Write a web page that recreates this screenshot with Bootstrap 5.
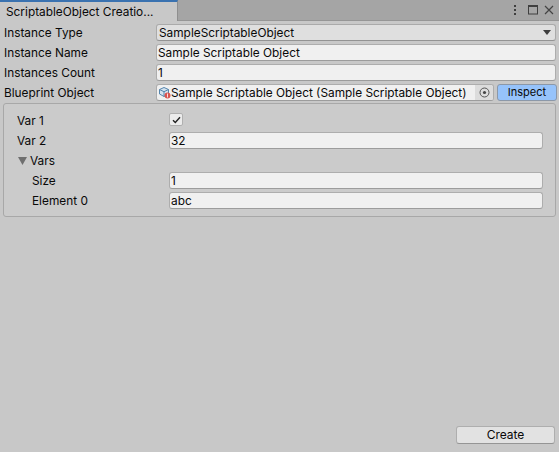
<!DOCTYPE html>
<html lang="en">
<head>
  <meta charset="UTF-8" />
  <meta name="viewport" content="width=device-width, initial-scale=1.0" />
  <title>ScriptableObject Creation</title>
  <link rel="stylesheet" href="https://cdn.jsdelivr.net/npm/bootstrap@5.3.0/dist/css/bootstrap.min.css" />
  <style>
    html, body { height: 100%; }
    body { background: #c8c8c8; color: #090909; font-family: Inter, "Liberation Sans", sans-serif; font-size: 11.85px; line-height: 18px; overflow: hidden; }
    .win { height: 452px; }
    .title-bar { height: 21px; background: #a5a5a5; border-bottom: 1px solid #969696; }
    .win-tab { width: 178px; height: 21px; margin-bottom: -1px; background: #c8c8c8; border-top: 2px solid #3a72b0; border-right: 1px solid #8f8f8f; padding-left: 6px; line-height: 21px; }
    .win-tools { padding-right: 5px; gap: 6px; }
    .max-icon { margin-left: 5px; }
    .form-area { padding: 3px 3px 0 4px; }
    .prop-row { height: 18px; margin-bottom: 2px; }
    .prop-label { width: 152px; flex: none; }
    .unity-field { flex: 1 1 0; min-width: 0; height: 17px; background: #f0f0f0; border: 1px solid #adadad; border-bottom-color: #9c9c9c; border-radius: 3px; padding-left: 1px; line-height: 16px; white-space: nowrap; overflow: hidden; }
    .unity-select { background: #dfdfdf; border-color: #aaa; border-bottom-color: #939393; padding-left: 2px; padding-right: 4px; }
    .obj-field { padding-left: 2px; padding-right: 0; }
    .obj-picker { width: 18px; height: 15px; background: #dcdcdc; flex: none; }
    .inspect-btn { width: 60px; height: 17px; margin-left: 3px; margin-right: -1px; flex: none; background: #96c3fb; border: 1px solid #8c98a8; border-radius: 3px; padding: 0; font-size: 11px; line-height: 15px; color: #090909; }
    .blue-panel { margin: -1px 3px 0 3px; height: 114px; background: #cbcbcb; border: 1px solid #a8a8a8; border-radius: 3px; padding: 8px 12px 0 13px; }
    .sub-label { padding-left: 15px; }
    .tick-box { width: 14px; height: 13px; background: #ececec; border: 1px solid #b0b0b0; border-radius: 2px; margin-top: 1px; }
    .fold-arrow { margin: 0 3px 0 1px; }
    .foot { padding: 0 4px 8px 0; margin-top: auto; }
    .create-btn { width: 99px; height: 18px; background: #e2e2e2; border: 1px solid #aeaeae; border-bottom-color: #959595; border-radius: 3px; padding: 0; font-size: 12px; line-height: 16px; color: #090909; }
  </style>
</head>
<body>
  <div class="win d-flex flex-column">
    <div class="title-bar d-flex justify-content-between align-items-center">
      <div class="win-tab text-nowrap">ScriptableObject Creatio...</div>
      <div class="win-tools d-flex align-items-center">
        <svg width="4" height="12" viewBox="0 0 4 12"><g fill="#3f3f3f"><rect x="1" y="1" width="2" height="2"/><rect x="1" y="5" width="2" height="2"/><rect x="1" y="9" width="2" height="2"/></g></svg>
        <svg width="10" height="10" viewBox="0 0 10 10" class="max-icon"><rect x=".5" y=".5" width="9" height="8.500" fill="none" stroke="#3f3f3f"/><rect x="0" y="0" width="10" height="2" fill="#3f3f3f"/></svg>
        <svg width="10" height="10" viewBox="0 0 10 10"><path d="M1 1l8 8M9 1l-8 8" stroke="#444" stroke-width="1.2" fill="none"/></svg>
      </div>
    </div>

    <div class="form-area">
      <div class="prop-row d-flex">
        <div class="prop-label">Instance Type</div>
        <div class="unity-field unity-select d-flex justify-content-between align-items-center">
          <span>SampleScriptableObject</span>
          <svg width="8" height="5" viewBox="0 0 8 5"><path d="M0 0h8L4 5z" fill="#3c3c3c"/></svg>
        </div>
      </div>
      <div class="prop-row d-flex">
        <div class="prop-label">Instance Name</div>
        <div class="unity-field">Sample Scriptable Object</div>
      </div>
      <div class="prop-row d-flex">
        <div class="prop-label">Instances Count</div>
        <div class="unity-field">1</div>
      </div>
      <div class="prop-row d-flex">
        <div class="prop-label">Blueprint Object</div>
        <div class="unity-field obj-field d-flex align-items-center">
          <svg width="12" height="12" viewBox="0 0 12 12" class="flex-shrink-0">
            <path d="M5 .5l4.500 2v4.500L5 9.500 .5 7V2.500z" fill="#d5e3ef" stroke="#5585ad"/>
            <path d="M.5 2.500L5 4.700 9.500 2.500M5 4.700V9.500" fill="none" stroke="#5585ad"/>
            <circle cx="8.500" cy="8.500" r="3" fill="#d9534f"/>
            <rect x="8" y="6.500" width="1" height="4" fill="#f6dcdc"/>
          </svg>
          <span class="flex-grow-1 overflow-hidden">Sample Scriptable Object (Sample Scriptable Object)</span>
          <span class="obj-picker d-flex align-items-center justify-content-center">
            <svg width="11" height="11" viewBox="0 0 11 11"><circle cx="5.500" cy="5.500" r="4.500" fill="none" stroke="#555"/><circle cx="5.500" cy="5.500" r="1.600" fill="#444"/></svg>
          </span>
        </div>
        <button type="button" class="btn inspect-btn">Inspect</button>
      </div>
    </div>

    <div class="blue-panel">
      <div class="prop-row d-flex">
        <div class="prop-label">Var 1</div>
        <div class="tick-box d-flex align-items-center justify-content-center">
          <svg width="9" height="8" viewBox="0 0 9 8"><path d="M1 4.200l2.300 2.300L8 1.200" fill="none" stroke="#222" stroke-width="1.400"/></svg>
        </div>
      </div>
      <div class="prop-row d-flex">
        <div class="prop-label">Var 2</div>
        <div class="unity-field">32</div>
      </div>
      <div class="prop-row d-flex align-items-center">
        <svg width="9" height="8" viewBox="0 0 9 8" class="fold-arrow"><path d="M0 0h9L4.500 8z" fill="#6f6f6f"/></svg>
        <span>Vars</span>
      </div>
      <div class="prop-row d-flex">
        <div class="prop-label sub-label">Size</div>
        <div class="unity-field">1</div>
      </div>
      <div class="prop-row d-flex">
        <div class="prop-label sub-label">Element 0</div>
        <div class="unity-field">abc</div>
      </div>
    </div>

    <div class="foot d-flex justify-content-end">
      <button type="button" class="btn create-btn">Create</button>
    </div>
  </div>
  <script src="https://cdn.jsdelivr.net/npm/bootstrap@5.3.0/dist/js/bootstrap.bundle.min.js"></script>
</body>
</html>
